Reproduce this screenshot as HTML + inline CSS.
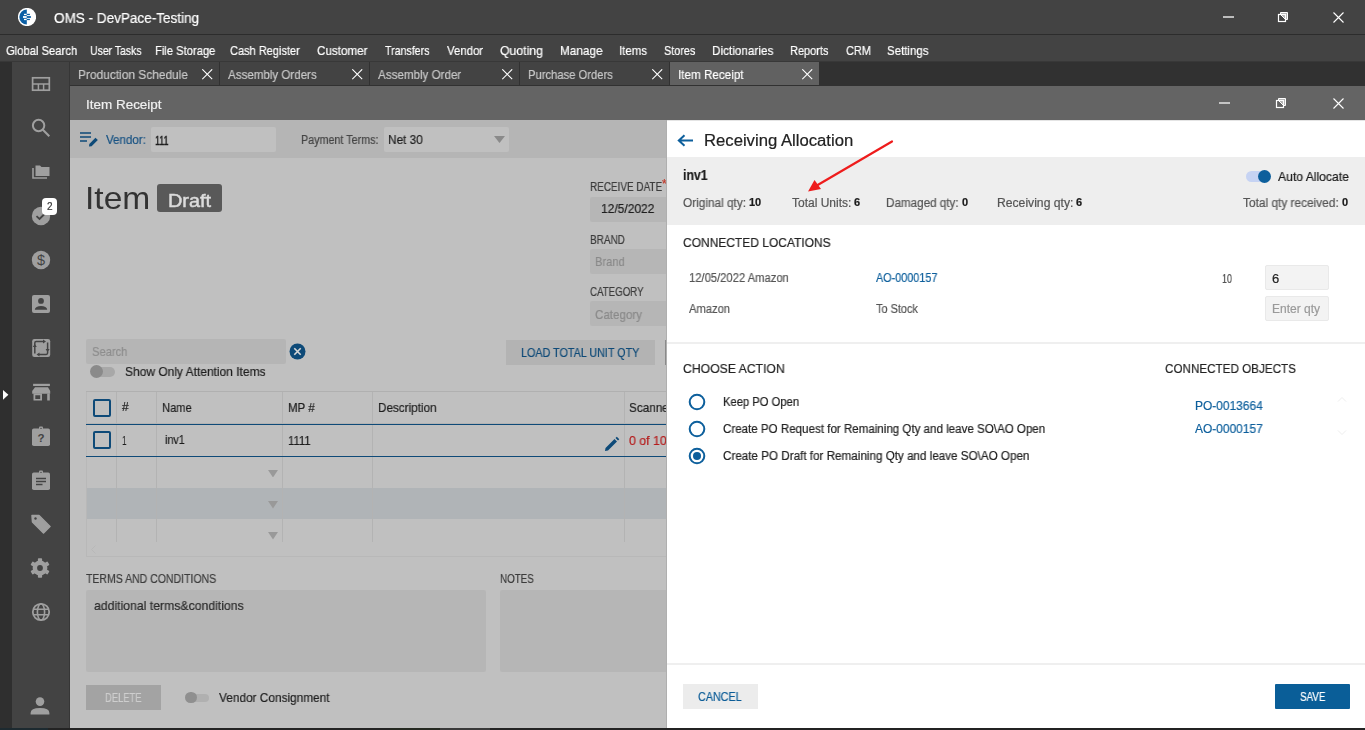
<!DOCTYPE html><html><head><meta charset="utf-8"><style>
html,body{margin:0;padding:0;width:1365px;height:730px;overflow:hidden;background:#c0c0c0;}
body{position:relative;font-family:"Liberation Sans",sans-serif;}
div,span,svg{position:absolute;}
span{white-space:nowrap;will-change:transform;-webkit-text-stroke:0.2px currentColor;}
</style></head><body>
<div style="left:0px;top:0px;width:1365px;height:34px;background:#434343;"></div>
<div style="left:0px;top:34px;width:1365px;height:1px;background:#2c2c2c;"></div>
<div style="left:0px;top:35px;width:1365px;height:26px;background:#434343;"></div>
<div style="left:0px;top:61px;width:1365px;height:1px;background:#383838;"></div>
<div style="left:0px;top:62px;width:12px;height:666px;background:#2f2f2f;"></div>
<div style="left:12px;top:62px;width:57px;height:666px;background:#434343;"></div>
<div style="left:69px;top:62px;width:1px;height:666px;background:#363636;"></div>
<div style="left:70px;top:62px;width:1295px;height:24px;background:#313131;"></div>
<div style="left:70px;top:86px;width:1295px;height:34px;background:#646464;"></div>
<div style="left:70px;top:120px;width:597px;height:608px;background:#c0c0c0;"></div>
<div style="left:0px;top:728px;width:1365px;height:2px;background:#232323;"></div>
<div style="left:0px;top:728px;width:48px;height:2px;background:#1d2a30;"></div>
<div style="left:390px;top:728px;width:50px;height:2px;background:#262a22;"></div>
<div style="left:440px;top:728px;width:50px;height:2px;background:#3a3a3a;"></div>
<svg style="position:absolute;left:18px;top:8px" width="18" height="18" viewBox="0 0 18 18"><circle cx="9" cy="9" r="9.1" fill="#fff"/><path d="M8.8 1.5 A7.5 7.5 0 0 0 8.8 16.5 Z" fill="#0b5fa5"/><rect x="6" y="5.8" width="2.8" height="1.3" fill="#fff"/><rect x="5" y="8.1" width="3.8" height="1.8" fill="#fff"/><rect x="6" y="10.8" width="2.8" height="1.3" fill="#fff"/><rect x="8.8" y="5.8" width="3.1" height="1.3" fill="#0b5fa5"/><rect x="8.8" y="8.1" width="4.1" height="1.8" fill="#0b5fa5"/><rect x="8.8" y="10.8" width="3.1" height="1.3" fill="#0b5fa5"/></svg>
<span style="left:53.50px;top:11.18px;font-size:14px;line-height:14px;color:#ffffff;transform:scaleX(0.9667);transform-origin:0 0;">OMS - DevPace-Testing</span>
<div style="left:1223px;top:16px;width:11px;height:2px;background:#bdbdbd;"></div>
<svg style="position:absolute;left:1277px;top:11px" width="13" height="12" viewBox="0 0 13 12"><path d="M3.5 3.5 V1.5 H10.5 V8.5 H8.5 Z" fill="#b0b0b0" stroke="#fff" stroke-width="1"/><rect x="1.5" y="3.5" width="7" height="7" fill="none" stroke="#fff" stroke-width="1.2"/></svg>
<svg style="position:absolute;left:1333px;top:12px" width="11" height="11" viewBox="0 0 11 11"><path d="M0.5 0.5 L10.5 10.5 M10.5 0.5 L0.5 10.5" stroke="#fff" stroke-width="1.1"/></svg>
<span style="left:6.10px;top:44.31px;font-size:13px;line-height:13px;color:#ffffff;transform:scaleX(0.8634);transform-origin:0 0;">Global Search</span>
<span style="left:89.70px;top:44.31px;font-size:13px;line-height:13px;color:#ffffff;transform:scaleX(0.8046);transform-origin:0 0;">User Tasks</span>
<span style="left:154.90px;top:44.31px;font-size:13px;line-height:13px;color:#ffffff;transform:scaleX(0.8614);transform-origin:0 0;">File Storage</span>
<span style="left:229.90px;top:44.31px;font-size:13px;line-height:13px;color:#ffffff;transform:scaleX(0.8470);transform-origin:0 0;">Cash Register</span>
<span style="left:317.00px;top:44.31px;font-size:13px;line-height:13px;color:#ffffff;transform:scaleX(0.8965);transform-origin:0 0;">Customer</span>
<span style="left:385.20px;top:44.31px;font-size:13px;line-height:13px;color:#ffffff;transform:scaleX(0.8182);transform-origin:0 0;">Transfers</span>
<span style="left:446.60px;top:44.31px;font-size:13px;line-height:13px;color:#ffffff;transform:scaleX(0.8762);transform-origin:0 0;">Vendor</span>
<span style="left:499.80px;top:44.31px;font-size:13px;line-height:13px;color:#ffffff;transform:scaleX(0.9435);transform-origin:0 0;">Quoting</span>
<span style="left:559.90px;top:44.31px;font-size:13px;line-height:13px;color:#ffffff;transform:scaleX(0.9064);transform-origin:0 0;">Manage</span>
<span style="left:619.00px;top:44.31px;font-size:13px;line-height:13px;color:#ffffff;transform:scaleX(0.8813);transform-origin:0 0;">Items</span>
<span style="left:663.50px;top:44.31px;font-size:13px;line-height:13px;color:#ffffff;transform:scaleX(0.8342);transform-origin:0 0;">Stores</span>
<span style="left:711.60px;top:44.31px;font-size:13px;line-height:13px;color:#ffffff;transform:scaleX(0.9029);transform-origin:0 0;">Dictionaries</span>
<span style="left:789.90px;top:44.31px;font-size:13px;line-height:13px;color:#ffffff;transform:scaleX(0.8457);transform-origin:0 0;">Reports</span>
<span style="left:845.70px;top:44.31px;font-size:13px;line-height:13px;color:#ffffff;transform:scaleX(0.8433);transform-origin:0 0;">CRM</span>
<span style="left:887.40px;top:44.31px;font-size:13px;line-height:13px;color:#ffffff;transform:scaleX(0.8830);transform-origin:0 0;">Settings</span>
<div style="left:70px;top:62px;width:149px;height:23px;background:#434343;"></div>
<span style="left:77.50px;top:68.31px;font-size:13px;line-height:13px;color:#c8c8c8;transform:scaleX(0.9167);transform-origin:0 0;">Production Schedule</span>
<svg style="position:absolute;left:202px;top:69px" width="10.5" height="10.5" viewBox="0 0 10.5 10.5"><path d="M0.3 0.3 L10.2 10.2 M10.2 0.3 L0.3 10.2" stroke="#fff" stroke-width="1.1"/></svg>
<div style="left:220px;top:62px;width:149px;height:23px;background:#434343;"></div>
<span style="left:227.50px;top:68.31px;font-size:13px;line-height:13px;color:#c8c8c8;transform:scaleX(0.8900);transform-origin:0 0;">Assembly Orders</span>
<svg style="position:absolute;left:352px;top:69px" width="10.5" height="10.5" viewBox="0 0 10.5 10.5"><path d="M0.3 0.3 L10.2 10.2 M10.2 0.3 L0.3 10.2" stroke="#fff" stroke-width="1.1"/></svg>
<div style="left:370px;top:62px;width:149px;height:23px;background:#434343;"></div>
<span style="left:377.50px;top:68.31px;font-size:13px;line-height:13px;color:#c8c8c8;transform:scaleX(0.8936);transform-origin:0 0;">Assembly Order</span>
<svg style="position:absolute;left:502px;top:69px" width="10.5" height="10.5" viewBox="0 0 10.5 10.5"><path d="M0.3 0.3 L10.2 10.2 M10.2 0.3 L0.3 10.2" stroke="#fff" stroke-width="1.1"/></svg>
<div style="left:520px;top:62px;width:149px;height:23px;background:#434343;"></div>
<span style="left:527.50px;top:68.31px;font-size:13px;line-height:13px;color:#c8c8c8;transform:scaleX(0.8626);transform-origin:0 0;">Purchase Orders</span>
<svg style="position:absolute;left:652px;top:69px" width="10.5" height="10.5" viewBox="0 0 10.5 10.5"><path d="M0.3 0.3 L10.2 10.2 M10.2 0.3 L0.3 10.2" stroke="#fff" stroke-width="1.1"/></svg>
<div style="left:670px;top:62px;width:149px;height:23px;background:#616161;"></div>
<span style="left:677.50px;top:68.31px;font-size:13px;line-height:13px;color:#ffffff;transform:scaleX(0.8973);transform-origin:0 0;">Item Receipt</span>
<svg style="position:absolute;left:802px;top:69px" width="10.5" height="10.5" viewBox="0 0 10.5 10.5"><path d="M0.3 0.3 L10.2 10.2 M10.2 0.3 L0.3 10.2" stroke="#fff" stroke-width="1.1"/></svg>
<span style="left:85.50px;top:97.91px;font-size:13px;line-height:13px;color:#f0f0f0;transform:scaleX(1.0356);transform-origin:0 0;">Item Receipt</span>
<div style="left:1219px;top:102px;width:11px;height:2px;background:#c4c4c4;"></div>
<svg style="position:absolute;left:1275px;top:97px" width="13" height="12" viewBox="0 0 13 12"><path d="M3.5 3.5 V1.5 H10.5 V8.5 H8.5 Z" fill="#b0b0b0" stroke="#fff" stroke-width="1"/><rect x="1.5" y="3.5" width="7" height="7" fill="none" stroke="#fff" stroke-width="1.2"/></svg>
<svg style="position:absolute;left:1333px;top:98px" width="11" height="11" viewBox="0 0 11 11"><path d="M0.5 0.5 L10.5 10.5 M10.5 0.5 L0.5 10.5" stroke="#fff" stroke-width="1.1"/></svg>
<svg style="position:absolute;left:30.5px;top:74.0px" width="20" height="20" viewBox="0 0 20 20"><rect x="1.6" y="3.8" width="16.7" height="12.4" fill="none" stroke="#9f9f9f" stroke-width="1.7"/><path d="M1.6 10 H18.3 M7.4 10 V16 M12.6 10 V16" stroke="#9f9f9f" stroke-width="1.5"/></svg>
<svg style="position:absolute;left:30.5px;top:118.0px" width="20" height="20" viewBox="0 0 20 20"><circle cx="7.6" cy="7.5" r="5.7" fill="none" stroke="#9f9f9f" stroke-width="2"/><path d="M11.6 11.6 L18.3 18.2" stroke="#9f9f9f" stroke-width="2.1"/></svg>
<svg style="position:absolute;left:30.5px;top:162.0px" width="20" height="20" viewBox="0 0 20 20"><path d="M2 6 V16 H16" fill="none" stroke="#9f9f9f" stroke-width="1.6"/><path d="M4.5 3.5 H9 L10.5 5 H18.5 V14 H4.5 Z" fill="#9f9f9f"/></svg>
<svg style="position:absolute;left:30.700000000000003px;top:206.0px" width="20" height="20" viewBox="0 0 20 20"><circle cx="10" cy="10" r="9.2" fill="#9f9f9f"/><path d="M5.5 10.2 L8.5 13 L14 7.5" fill="none" stroke="#434343" stroke-width="1.8"/></svg>
<div style="left:42px;top:198px;width:15px;height:17px;background:#fff;border-radius:4px;"></div>
<span style="left:46.50px;top:202.20px;font-size:10px;line-height:10px;color:#3a3a3a;">2</span>
<svg style="position:absolute;left:30.5px;top:250.0px" width="20" height="20" viewBox="0 0 20 20"><circle cx="10" cy="10" r="9.2" fill="#9f9f9f"/><text x="10" y="14.8" font-size="14.5" font-family="Liberation Sans" text-anchor="middle" fill="#434343" style="-webkit-font-smoothing:none">$</text></svg>
<svg style="position:absolute;left:30.5px;top:294.0px" width="20" height="20" viewBox="0 0 20 20"><rect x="1" y="1" width="18" height="18" rx="2" fill="#9f9f9f"/><circle cx="10" cy="6.9" r="2.9" fill="#434343"/><path d="M3.8 15.8 A6.2 3.9 0 0 1 16.2 15.8 Z" fill="#434343"/></svg>
<svg style="position:absolute;left:30.5px;top:338.0px" width="20" height="20" viewBox="0 0 20 20"><rect x="1.2" y="1" width="18" height="18" rx="2.2" fill="#9f9f9f"/><path d="M3.8 9 V5 Q3.8 3.6 5.2 3.6 H12.5" fill="none" stroke="#434343" stroke-width="1.5"/><path d="M12 1.6 L15 3.6 L12 5.6 Z" fill="#434343"/><path d="M16.6 4.5 V11.5" fill="none" stroke="#434343" stroke-width="1.5"/><path d="M14.6 11 L16.6 14 L18.6 11 Z" fill="#434343"/><path d="M16.6 11.5 V15 Q16.6 16.4 15.2 16.4 H8" fill="none" stroke="#434343" stroke-width="1.5"/><path d="M8.5 14.4 L5.5 16.4 L8.5 18.4 Z" fill="#434343"/><path d="M3.8 15.5 V8.5" fill="none" stroke="#434343" stroke-width="1.5"/><path d="M1.8 9 L3.8 6 L5.8 9 Z" fill="#434343"/></svg>
<svg style="position:absolute;left:30.5px;top:382.0px" width="20" height="20" viewBox="0 0 20 20"><rect x="2.1" y="1.8" width="16.8" height="2.2" fill="#9f9f9f"/><path d="M4 5.3 H17 L19.2 9 V11.7 H1.2 V9 Z" fill="#9f9f9f"/><path d="M2.5 11.5 H11 V18.5 H2.5 Z M4.3 13.3 V17 H9.2 V13.3 Z" fill="#9f9f9f" fill-rule="evenodd"/><rect x="16.2" y="11.5" width="2.6" height="7" fill="#9f9f9f"/></svg>
<svg style="position:absolute;left:30.5px;top:426.0px" width="20" height="20" viewBox="0 0 20 20"><rect x="1" y="2.5" width="18" height="17.5" rx="1.8" fill="#9f9f9f"/><rect x="8" y="0.5" width="4" height="3" rx="1" fill="#9f9f9f"/><circle cx="10" cy="2.4" r="0.7" fill="#434343"/><text x="10" y="15.5" font-size="11.5" font-family="Liberation Sans" font-weight="bold" text-anchor="middle" fill="#434343" style="-webkit-font-smoothing:none">?</text></svg>
<svg style="position:absolute;left:30.5px;top:470.0px" width="20" height="20" viewBox="0 0 20 20"><rect x="1" y="2.5" width="18" height="17.5" rx="1.8" fill="#9f9f9f"/><rect x="8" y="0.5" width="4" height="3" rx="1" fill="#9f9f9f"/><circle cx="10" cy="2.4" r="0.7" fill="#434343"/><path d="M5 8.5 H15 M5 11.5 H15 M5 14.5 H11.5" stroke="#434343" stroke-width="1.4"/></svg>
<svg style="position:absolute;left:30.5px;top:514.0px" width="20" height="20" viewBox="0 0 20 20"><path d="M1 1.5 H8 L19 12.5 L12.5 19 L1.5 8 Z" fill="#9f9f9f" stroke="#9f9f9f" stroke-linejoin="round" stroke-width="1.5"/><circle cx="4.5" cy="4.5" r="1.2" fill="#434343"/></svg>
<svg style="position:absolute;left:30.4px;top:558.0px" width="20" height="20" viewBox="0 0 20 20"><rect x="7.9" y="0.2" width="4.2" height="5" rx="0.8" fill="#9f9f9f" transform="rotate(0 10 10)"/><rect x="7.9" y="0.2" width="4.2" height="5" rx="0.8" fill="#9f9f9f" transform="rotate(60 10 10)"/><rect x="7.9" y="0.2" width="4.2" height="5" rx="0.8" fill="#9f9f9f" transform="rotate(120 10 10)"/><rect x="7.9" y="0.2" width="4.2" height="5" rx="0.8" fill="#9f9f9f" transform="rotate(180 10 10)"/><rect x="7.9" y="0.2" width="4.2" height="5" rx="0.8" fill="#9f9f9f" transform="rotate(240 10 10)"/><rect x="7.9" y="0.2" width="4.2" height="5" rx="0.8" fill="#9f9f9f" transform="rotate(300 10 10)"/><circle cx="10" cy="10" r="7.4" fill="#9f9f9f"/><circle cx="10" cy="10" r="2.9" fill="#434343"/></svg>
<svg style="position:absolute;left:30.5px;top:602.0px" width="20" height="20" viewBox="0 0 20 20"><circle cx="10" cy="10" r="8.2" fill="none" stroke="#9f9f9f" stroke-width="1.8"/><ellipse cx="10" cy="10" rx="3.6" ry="8.2" fill="none" stroke="#9f9f9f" stroke-width="1.6"/><path d="M2 7.3 H18 M2 12.7 H18" stroke="#9f9f9f" stroke-width="1.6"/></svg>
<svg style="position:absolute;left:30.299999999999997px;top:696.0px" width="20" height="20" viewBox="0 0 20 20"><circle cx="10" cy="5.6" r="4.3" fill="#9f9f9f"/><path d="M0.6 18.6 V17 Q0.6 12 10 12 Q19.4 12 19.4 17 V18.6 Z" fill="#9f9f9f"/></svg>
<svg style="position:absolute;left:2.8px;top:389.5px" width="6" height="10" viewBox="0 0 6 10"><path d="M0 0 L5.4 4.8 L0 9.8 Z" fill="#fff"/></svg>
<div style="left:70px;top:120px;width:597px;height:38px;background:#b5b5b5;"></div>
<svg style="position:absolute;left:79px;top:131px" width="20" height="17" viewBox="0 0 20 17"><path d="M1 2 H12 M1 6 H12 M1 10 H8" stroke="#0e4a78" stroke-width="1.7"/><path d="M10 15.5 L10.3 13 L16.5 6.8 L18.8 9.1 L12.6 15.3 Z" fill="#0e4a78"/></svg>
<span style="left:105.50px;top:134.04px;font-size:12px;line-height:12px;color:#175283;transform:scaleX(0.9634);transform-origin:0 0;">Vendor:</span>
<div style="left:151px;top:127px;width:125px;height:25px;background:#c0c0c0;border-radius:2px;"></div>
<span style="left:155.00px;top:133.51px;font-size:13px;line-height:13px;color:#1e1e1e;transform:scaleX(0.6850);transform-origin:0 0;-webkit-text-stroke:0.45px #1e1e1e;">111</span>
<span style="left:301.00px;top:133.94px;font-size:12px;line-height:12px;color:#454545;transform:scaleX(0.8953);transform-origin:0 0;">Payment Terms:</span>
<div style="left:384px;top:127px;width:125px;height:25px;background:#c0c0c0;border-radius:2px;"></div>
<span style="left:388.10px;top:133.11px;font-size:13px;line-height:13px;color:#1e1e1e;transform:scaleX(0.9105);transform-origin:0 0;">Net 30</span>
<svg style="position:absolute;left:494px;top:136px" width="11" height="8" viewBox="0 0 11 8"><path d="M0 0 H11 L5.5 7 Z" fill="#8a8a8a"/></svg>
<span style="left:85.30px;top:181.84px;font-size:32px;line-height:32px;color:#333333;transform:scaleX(1.0484);transform-origin:0 0;-webkit-text-stroke:0;">Item</span>
<div style="left:157px;top:184px;width:65px;height:28px;background:#595959;border-radius:3px;"></div>
<span style="left:167.50px;top:190.53px;font-size:19px;line-height:19px;color:#dcdcdc;transform:scaleX(1.0476);transform-origin:0 0;-webkit-text-stroke:0.5px #dcdcdc;">Draft</span>
<span style="left:590.00px;top:181.24px;font-size:12px;line-height:12px;color:#3c3c3c;transform:scaleX(0.8276);transform-origin:0 0;">RECEIVE DATE</span>
<span style="left:661.50px;top:178.44px;font-size:12px;line-height:12px;color:#c0392b;">*</span>
<div style="left:590px;top:197px;width:77px;height:25px;background:#b6b6b6;border-radius:2px 0 0 2px;"></div>
<span style="left:601.20px;top:202.31px;font-size:13px;line-height:13px;color:#1e1e1e;transform:scaleX(0.9241);transform-origin:0 0;">12/5/2022</span>
<span style="left:590.00px;top:233.94px;font-size:12px;line-height:12px;color:#3c3c3c;transform:scaleX(0.8310);transform-origin:0 0;">BRAND</span>
<div style="left:590px;top:249px;width:77px;height:25px;background:#b6b6b6;border-radius:2px 0 0 2px;"></div>
<span style="left:595.20px;top:255.31px;font-size:13px;line-height:13px;color:#8a8a8a;transform:scaleX(0.8571);transform-origin:0 0;">Brand</span>
<span style="left:590.00px;top:285.74px;font-size:12px;line-height:12px;color:#3c3c3c;transform:scaleX(0.8091);transform-origin:0 0;">CATEGORY</span>
<div style="left:590px;top:301px;width:77px;height:25px;background:#b6b6b6;border-radius:2px 0 0 2px;"></div>
<span style="left:594.80px;top:307.51px;font-size:13px;line-height:13px;color:#8a8a8a;transform:scaleX(0.8906);transform-origin:0 0;">Category</span>
<div style="left:86px;top:339px;width:200px;height:25px;background:#b5b5b5;border-radius:2px;"></div>
<span style="left:91.50px;top:345.31px;font-size:13px;line-height:13px;color:#8e8e8e;transform:scaleX(0.8561);transform-origin:0 0;">Search</span>
<svg style="position:absolute;left:288.5px;top:343px" width="17" height="17" viewBox="0 0 17 17"><circle cx="8.5" cy="8.5" r="8" fill="#0e4a78"/><path d="M5.3 5.3 L11.7 11.7 M11.7 5.3 L5.3 11.7" stroke="#d8d8d8" stroke-width="1.6"/></svg>
<div style="left:91px;top:367px;width:24px;height:10px;background:#a8a8a8;border-radius:5px;"></div>
<div style="left:90px;top:365px;width:13px;height:13px;border-radius:50%;background:#8a8a8a;"></div>
<span style="left:124.80px;top:365.21px;font-size:13px;line-height:13px;color:#1e1e1e;transform:scaleX(0.9216);transform-origin:0 0;">Show Only Attention Items</span>
<div style="left:506px;top:340px;width:149px;height:25px;background:#b3b3b3;"></div>
<span style="left:520.90px;top:346.64px;font-size:12px;line-height:12px;color:#0e4a78;transform:scaleX(0.8962);transform-origin:0 0;">LOAD TOTAL UNIT QTY</span>
<div style="left:665px;top:340px;width:2px;height:25px;background:#8a8a8a;"></div>
<div style="left:86px;top:391px;width:581px;height:1px;background:#b0b0b0;"></div>
<div style="left:86px;top:392px;width:1px;height:165px;background:#b8b8b8;"></div>
<div style="left:86px;top:556px;width:581px;height:1px;background:#b8b8b8;"></div>
<div style="left:87px;top:488px;width:580px;height:31px;background:#b0b4b7;"></div>
<div style="left:116px;top:392px;width:1px;height:150px;background:#b3b3b3;"></div>
<div style="left:156px;top:392px;width:1px;height:150px;background:#b3b3b3;"></div>
<div style="left:282px;top:392px;width:1px;height:150px;background:#b3b3b3;"></div>
<div style="left:372px;top:392px;width:1px;height:150px;background:#b3b3b3;"></div>
<div style="left:624px;top:392px;width:1px;height:150px;background:#b3b3b3;"></div>
<div style="left:86px;top:423px;width:581px;height:1px;background:#b3b3b3;"></div>
<div style="left:86px;top:424px;width:581px;height:1px;background:#0e4a78;"></div>
<div style="left:86px;top:456px;width:581px;height:1px;background:#0e4a78;"></div>
<div style="left:93px;top:399px;width:13.5px;height:13.5px;border:2px solid #0e4a78;border-radius:2px;"></div>
<div style="left:93px;top:431px;width:13.5px;height:13.5px;border:2px solid #0e4a78;border-radius:2px;"></div>
<span style="left:121.50px;top:401.14px;font-size:12px;line-height:12px;color:#1e1e1e;transform:scaleX(0.9857);transform-origin:0 0;">#</span>
<span style="left:162.10px;top:401.11px;font-size:13px;line-height:13px;color:#1e1e1e;transform:scaleX(0.8571);transform-origin:0 0;">Name</span>
<span style="left:287.90px;top:401.11px;font-size:13px;line-height:13px;color:#1e1e1e;transform:scaleX(0.8839);transform-origin:0 0;">MP #</span>
<span style="left:378.00px;top:401.11px;font-size:13px;line-height:13px;color:#1e1e1e;transform:scaleX(0.9015);transform-origin:0 0;">Description</span>
<span style="left:629.00px;top:401.11px;font-size:13px;line-height:13px;color:#1e1e1e;transform:scaleX(0.9020);transform-origin:0 0;">Scanned</span>
<span style="left:122.30px;top:434.11px;font-size:13px;line-height:13px;color:#1e1e1e;transform:scaleX(0.6286);transform-origin:0 0;">1</span>
<span style="left:165.20px;top:432.91px;font-size:13px;line-height:13px;color:#1e1e1e;transform:scaleX(0.8333);transform-origin:0 0;">inv1</span>
<span style="left:287.90px;top:434.31px;font-size:13px;line-height:13px;color:#1e1e1e;transform:scaleX(0.8692);transform-origin:0 0;">1111</span>
<span style="left:629.20px;top:434.11px;font-size:13px;line-height:13px;color:#b51b1b;transform:scaleX(0.9500);transform-origin:0 0;">0 of 10</span>
<svg style="position:absolute;left:603.5px;top:435.5px" width="16" height="16" viewBox="0 0 16 16"><path d="M1 15 L1.5 12 L10.5 3 L13 5.5 L4 14.5 Z M11.5 2 L12.8 0.7 L15.3 3.2 L14 4.5 Z" fill="#0e4a78"/></svg>
<svg style="position:absolute;left:268px;top:469.5px" width="10" height="7.5" viewBox="0 0 10 7.5"><path d="M0 0 H10 L5 7.5 Z" fill="#999"/></svg>
<svg style="position:absolute;left:268px;top:501px" width="10" height="7.5" viewBox="0 0 10 7.5"><path d="M0 0 H10 L5 7.5 Z" fill="#999"/></svg>
<svg style="position:absolute;left:268px;top:532px" width="10" height="7.5" viewBox="0 0 10 7.5"><path d="M0 0 H10 L5 7.5 Z" fill="#999"/></svg>
<svg style="position:absolute;left:91px;top:545px" width="5" height="9" viewBox="0 0 5 9"><path d="M4.5 0.5 L0.5 4.5 L4.5 8.5" fill="none" stroke="#b8b8b8" stroke-width="1"/></svg>
<span style="left:85.70px;top:573.24px;font-size:12px;line-height:12px;color:#3c3c3c;transform:scaleX(0.8752);transform-origin:0 0;">TERMS AND CONDITIONS</span>
<span style="left:499.50px;top:573.24px;font-size:12px;line-height:12px;color:#3c3c3c;transform:scaleX(0.8171);transform-origin:0 0;">NOTES</span>
<div style="left:86px;top:590px;width:400px;height:82px;background:#b6b6b6;border-radius:2px;"></div>
<div style="left:500px;top:590px;width:167px;height:82px;background:#b6b6b6;border-radius:2px 0 0 2px;"></div>
<span style="left:93.70px;top:599.31px;font-size:13px;line-height:13px;color:#2a2a2a;transform:scaleX(0.9412);transform-origin:0 0;">additional terms&amp;conditions</span>
<div style="left:86px;top:685px;width:75px;height:25px;background:#a3a3a3;"></div>
<span style="left:105.20px;top:691.74px;font-size:12px;line-height:12px;color:#cecece;transform:scaleX(0.7830);transform-origin:0 0;">DELETE</span>
<div style="left:185.5px;top:693.5px;width:23.5px;height:8px;background:#b0b0b0;border-radius:4px;"></div>
<div style="left:185px;top:691.6px;width:11.8px;height:11.8px;border-radius:50%;background:#8f8f8f;"></div>
<span style="left:218.90px;top:690.91px;font-size:13px;line-height:13px;color:#1e1e1e;transform:scaleX(0.9107);transform-origin:0 0;">Vendor Consignment</span>
<div style="left:666px;top:120px;width:1px;height:608px;background:#afafaf;"></div>
<div style="left:667px;top:120px;width:698px;height:608px;background:#ffffff;"></div>
<svg style="position:absolute;left:677px;top:134px" width="17" height="13" viewBox="0 0 17 13"><path d="M16 6.5 H2.5 M7.5 1.2 L1.8 6.5 L7.5 11.8" fill="none" stroke="#0d5f9c" stroke-width="2"/></svg>
<span style="left:704.00px;top:133.12px;font-size:16px;line-height:16px;color:#222;transform:scaleX(1.0420);transform-origin:0 0;">Receiving Allocation</span>
<div style="left:667px;top:120px;width:698px;height:1px;background:#e4e4e4;"></div>
<div style="left:667px;top:157px;width:698px;height:68px;background:#eeeeee;"></div>
<span style="left:683.00px;top:168.38px;font-size:14px;line-height:14px;color:#1a1a1a;transform:scaleX(0.8750);transform-origin:0 0;font-weight:bold;">inv1</span>
<span style="left:683.00px;top:197.24px;font-size:12px;line-height:12px;color:#555;transform:scaleX(0.9844);transform-origin:0 0;">Original qty:</span>
<span style="left:749.00px;top:197.37px;font-size:11px;line-height:11px;color:#1a1a1a;font-weight:bold;">10</span>
<span style="left:791.50px;top:197.24px;font-size:12px;line-height:12px;color:#555;">Total Units:</span>
<span style="left:853.50px;top:197.37px;font-size:11px;line-height:11px;color:#1a1a1a;font-weight:bold;">6</span>
<span style="left:886.30px;top:197.24px;font-size:12px;line-height:12px;color:#555;transform:scaleX(0.9733);transform-origin:0 0;">Damaged qty:</span>
<span style="left:962.30px;top:197.37px;font-size:11px;line-height:11px;color:#1a1a1a;font-weight:bold;">0</span>
<span style="left:996.50px;top:197.24px;font-size:12px;line-height:12px;color:#555;transform:scaleX(1.0133);transform-origin:0 0;">Receiving qty:</span>
<span style="left:1075.50px;top:197.37px;font-size:11px;line-height:11px;color:#1a1a1a;font-weight:bold;">6</span>
<span style="left:1242.80px;top:197.24px;font-size:12px;line-height:12px;color:#555;transform:scaleX(0.9897);transform-origin:0 0;">Total qty received:</span>
<span style="left:1341.80px;top:197.37px;font-size:11px;line-height:11px;color:#1a1a1a;font-weight:bold;">0</span>
<div style="left:1246px;top:171px;width:24px;height:11px;background:#c6d3f3;border-radius:6px;"></div>
<div style="left:1257.5px;top:170px;width:13px;height:13px;border-radius:50%;background:#0d5f9c;"></div>
<span style="left:1278.10px;top:169.81px;font-size:13px;line-height:13px;color:#1a1a1a;transform:scaleX(0.9342);transform-origin:0 0;">Auto Allocate</span>
<svg style="position:absolute;left:800px;top:135px" width="100" height="65" viewBox="0 0 100 65"><path d="M92 6.5 L16 51" stroke="#ee1c1c" stroke-width="2.2" stroke-linecap="round"/><path d="M8 56.5 L14.5 45 L21 54 Z" fill="#ee1c1c"/></svg>
<span style="left:683.00px;top:236.11px;font-size:13px;line-height:13px;color:#222;transform:scaleX(0.9219);transform-origin:0 0;">CONNECTED LOCATIONS</span>
<span style="left:688.90px;top:272.44px;font-size:12px;line-height:12px;color:#555;transform:scaleX(0.9346);transform-origin:0 0;">12/05/2022 Amazon</span>
<span style="left:875.50px;top:272.44px;font-size:12px;line-height:12px;color:#0d5f9c;transform:scaleX(0.9015);transform-origin:0 0;">AO-0000157</span>
<span style="left:1221.50px;top:272.64px;font-size:12px;line-height:12px;color:#555;transform:scaleX(0.7357);transform-origin:0 0;">10</span>
<div style="left:1265px;top:265px;width:64px;height:25px;background:#f3f3f3;border-radius:2px;box-sizing:border-box;border:1px solid #e9e9e9;"></div>
<span style="left:1271.50px;top:272.31px;font-size:13px;line-height:13px;color:#222;">6</span>
<div style="left:1265px;top:296px;width:64px;height:25px;background:#f3f3f3;border-radius:2px;box-sizing:border-box;border:1px solid #e9e9e9;"></div>
<span style="left:1271.50px;top:302.94px;font-size:12px;line-height:12px;color:#9a9a9a;">Enter qty</span>
<span style="left:688.90px;top:303.44px;font-size:12px;line-height:12px;color:#555;transform:scaleX(0.9318);transform-origin:0 0;">Amazon</span>
<span style="left:875.50px;top:303.44px;font-size:12px;line-height:12px;color:#555;transform:scaleX(0.9106);transform-origin:0 0;">To Stock</span>
<div style="left:667px;top:342px;width:698px;height:2px;background:#efefef;"></div>
<span style="left:682.70px;top:362.31px;font-size:13px;line-height:13px;color:#222;transform:scaleX(0.9389);transform-origin:0 0;">CHOOSE ACTION</span>
<svg style="position:absolute;left:687.7px;top:393.2px" width="18" height="18" viewBox="0 0 18 18"><circle cx="9" cy="9" r="7.3" fill="none" stroke="#0d5f9c" stroke-width="2"/></svg>
<svg style="position:absolute;left:687.7px;top:420.2px" width="18" height="18" viewBox="0 0 18 18"><circle cx="9" cy="9" r="7.3" fill="none" stroke="#0d5f9c" stroke-width="2"/></svg>
<svg style="position:absolute;left:687.7px;top:446.8px" width="18" height="18" viewBox="0 0 18 18"><circle cx="9" cy="9" r="7.3" fill="none" stroke="#0d5f9c" stroke-width="2"/><circle cx="9" cy="9" r="4" fill="#0d5f9c"/></svg>
<span style="left:723.10px;top:395.94px;font-size:12px;line-height:12px;color:#222;transform:scaleX(0.9346);transform-origin:0 0;">Keep PO Open</span>
<span style="left:723.10px;top:422.94px;font-size:12px;line-height:12px;color:#222;transform:scaleX(0.9641);transform-origin:0 0;">Create PO Request for Remaining Qty and leave SO\AO Open</span>
<span style="left:723.10px;top:449.94px;font-size:12px;line-height:12px;color:#222;transform:scaleX(0.9714);transform-origin:0 0;">Create PO Draft for Remaining Qty and leave SO\AO Open</span>
<span style="left:1164.50px;top:362.31px;font-size:13px;line-height:13px;color:#222;transform:scaleX(0.8973);transform-origin:0 0;">CONNECTED OBJECTS</span>
<span style="left:1194.60px;top:399.94px;font-size:12px;line-height:12px;color:#0d5f9c;transform:scaleX(0.9941);transform-origin:0 0;">PO-0013664</span>
<span style="left:1194.60px;top:422.84px;font-size:12px;line-height:12px;color:#0d5f9c;transform:scaleX(0.9941);transform-origin:0 0;">AO-0000157</span>
<svg style="position:absolute;left:1337px;top:396px" width="10" height="40" viewBox="0 0 10 40"><path d="M1 5.5 L5 1.5 L9 5.5 M1 34.5 L5 38.5 L9 34.5" fill="none" stroke="#eeeeee" stroke-width="1"/></svg>
<div style="left:667px;top:663px;width:698px;height:2px;background:#efefef;"></div>
<div style="left:683px;top:684px;width:75px;height:25px;background:#ececec;"></div>
<span style="left:698.20px;top:691.04px;font-size:12px;line-height:12px;color:#0b5c97;transform:scaleX(0.8959);transform-origin:0 0;">CANCEL</span>
<div style="left:1275px;top:684px;width:75px;height:25px;background:#0a5e98;border-radius:1px;"></div>
<span style="left:1299.90px;top:691.24px;font-size:12px;line-height:12px;color:#ffffff;transform:scaleX(0.8194);transform-origin:0 0;">SAVE</span>
</body></html>
